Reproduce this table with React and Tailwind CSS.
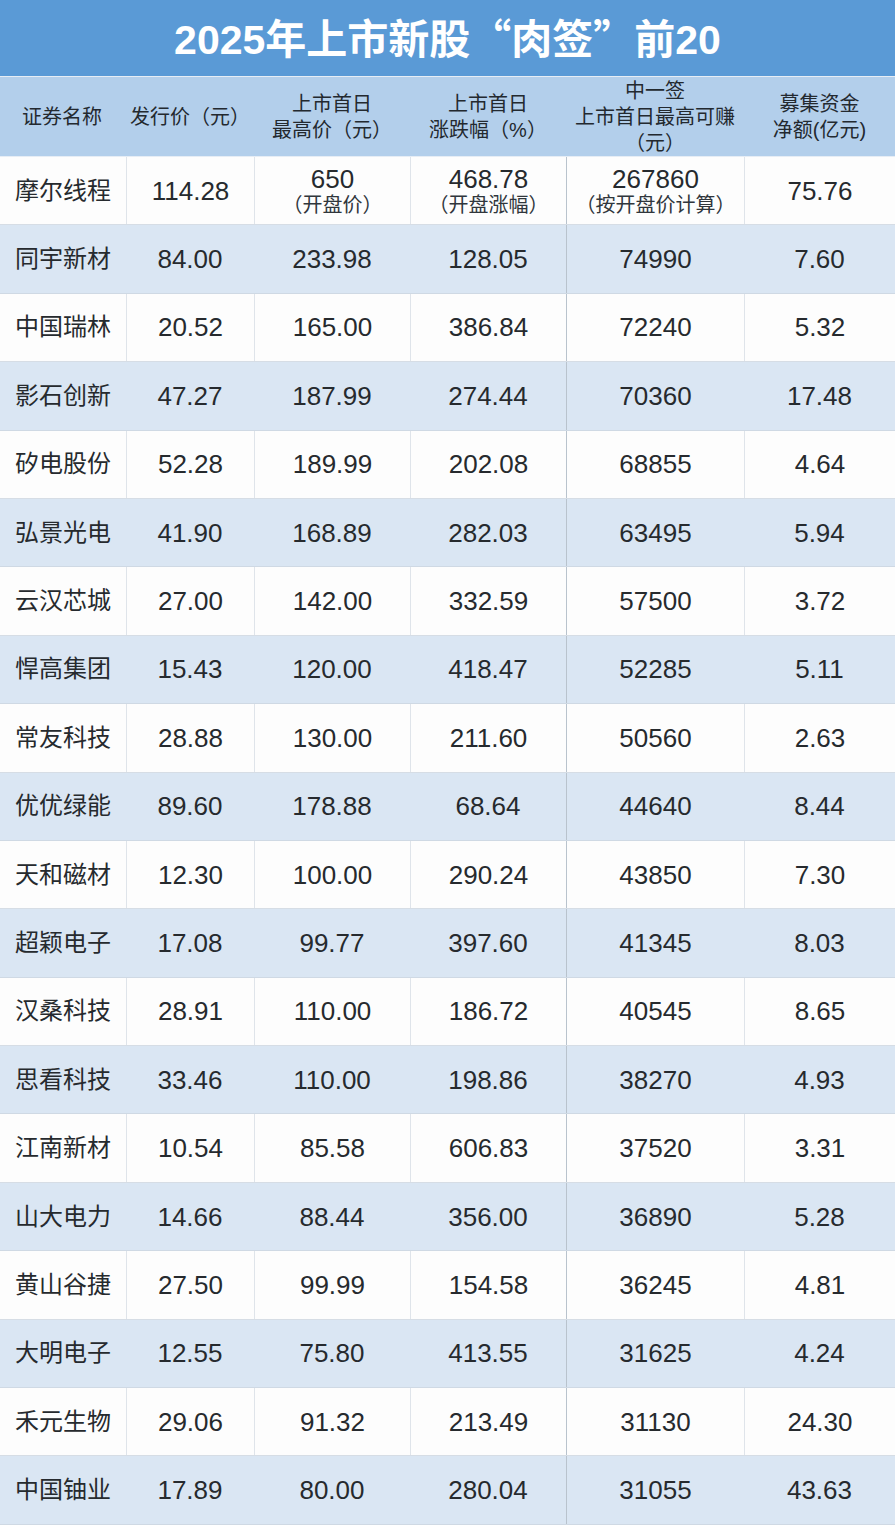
import React from 'react';

const rows = [
  ['摩尔线程', '114.28', '650', '468.78', '267860', '75.76'],
  ['同宇新材', '84.00', '233.98', '128.05', '74990', '7.60'],
  ['中国瑞林', '20.52', '165.00', '386.84', '72240', '5.32'],
  ['影石创新', '47.27', '187.99', '274.44', '70360', '17.48'],
  ['矽电股份', '52.28', '189.99', '202.08', '68855', '4.64'],
  ['弘景光电', '41.90', '168.89', '282.03', '63495', '5.94'],
  ['云汉芯城', '27.00', '142.00', '332.59', '57500', '3.72'],
  ['悍高集团', '15.43', '120.00', '418.47', '52285', '5.11'],
  ['常友科技', '28.88', '130.00', '211.60', '50560', '2.63'],
  ['优优绿能', '89.60', '178.88', '68.64', '44640', '8.44'],
  ['天和磁材', '12.30', '100.00', '290.24', '43850', '7.30'],
  ['超颖电子', '17.08', '99.77', '397.60', '41345', '8.03'],
  ['汉桑科技', '28.91', '110.00', '186.72', '40545', '8.65'],
  ['思看科技', '33.46', '110.00', '198.86', '38270', '4.93'],
  ['江南新材', '10.54', '85.58', '606.83', '37520', '3.31'],
  ['山大电力', '14.66', '88.44', '356.00', '36890', '5.28'],
  ['黄山谷捷', '27.50', '99.99', '154.58', '36245', '4.81'],
  ['大明电子', '12.55', '75.80', '413.55', '31625', '4.24'],
  ['禾元生物', '29.06', '91.32', '213.49', '31130', '24.30'],
  ['中国铀业', '17.89', '80.00', '280.04', '31055', '43.63'],
];

// first row carries a note under the number in three columns
const notes = { 2: '（开盘价）', 3: '（开盘涨幅）', 4: '（按开盘价计算）' };

const cols = 'grid grid-cols-[126px_128px_156px_156px_178px_151px]';

const Cell = ({ children, idx, blue }) => {
  // white rows show every divider, blue rows only the one before col 5
  let border = '';
  if (idx > 0) {
    if (idx === 4) border = 'border-l border-[#b9c3cd]';
    else if (!blue) border = 'border-l border-[#dfe4ea]';
  }
  return (
    <div
      className={`flex flex-col justify-center ${idx === 0 ? 'items-start pl-[15px]' : 'items-center'} ${border}`}
    >
      {children}
    </div>
  );
};

const cjk = { fontFamily: '"Noto Sans CJK SC", sans-serif' };

export default function App() {
  return (
    <div
      className="w-[895px] bg-white text-[#262a2e]"
      style={{ fontFamily: '"Liberation Sans", "Noto Sans CJK SC", sans-serif' }}
    >
      {/* Title */}
      <div className="h-[76px] bg-[#5a9ad6] flex items-center justify-center">
        <h1 className="text-[41px] font-bold text-white leading-none">
          2025年上市新股<span style={cjk}>“</span>肉签<span style={cjk}>”</span>前20
        </h1>
      </div>

      {/* Header */}
      <div className={`${cols} h-[81px] bg-[#b3cfeb] border-t border-[#8fb5de] text-[20px] leading-[26px] text-[#23292f] border-b border-[#e6edf5]`}>
        <div className="flex items-center pl-[22px]">证券名称</div>
        <div className="flex items-center justify-center">发行价（元）</div>
        <div className="flex flex-col items-center justify-center">
          <span>上市首日</span>
          <span>最高价（元）</span>
        </div>
        <div className="flex flex-col items-center justify-center">
          <span>上市首日</span>
          <span>涨跌幅（%）</span>
        </div>
        <div className="flex flex-col items-center justify-center">
          <span>中一签</span>
          <span>上市首日最高可赚</span>
          <span>（元）</span>
        </div>
        <div className="flex flex-col items-center justify-center">
          <span>募集资金</span>
          <span>净额(亿元)</span>
        </div>
      </div>

      {/* Rows */}
      {rows.map((r, i) => {
        const blue = i % 2 === 1;
        return (
          <div
            key={i}
            className={`${cols} h-[68.4px] border-b ${blue ? 'bg-[#dae6f3] border-[#cfd9e4]' : 'bg-[#fdfdfd] border-[#d6dde5]'}`}
          >
            {r.map((v, j) => (
              <Cell key={j} idx={j} blue={blue}>
                <span className={`${j === 0 ? 'text-[24px]' : 'text-[26px]'} leading-[28px]`}>{v}</span>
                {i === 0 && notes[j] && (
                  <span className="text-[20px] leading-[24px] text-[#30363c]">{notes[j]}</span>
                )}
              </Cell>
            ))}
          </div>
        );
      })}
    </div>
  );
}
